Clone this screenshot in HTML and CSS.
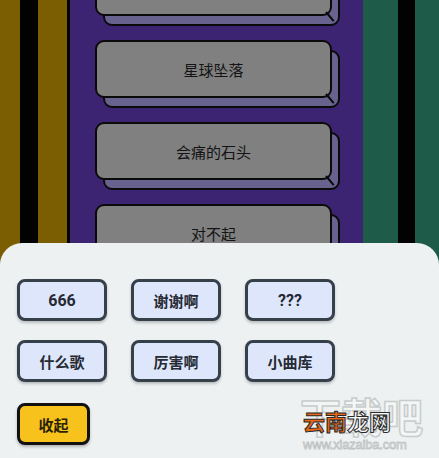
FILE: index.html
```html
<!DOCTYPE html>
<html lang="zh">
<head>
<meta charset="utf-8">
<link rel="stylesheet" href="styles.css">
</head>
<body>
<div class="stage">
  <div class="col olive w20"></div>
  <div class="col black w18"></div>
  <div class="col olive w29"></div>
  <div class="col black w3"></div>
  <div class="col purple">
    <div class="song"><div class="face"></div></div>
    <div class="song"><div class="face">星球坠落</div></div>
    <div class="song"><div class="face">会痛的石头</div></div>
    <div class="song"><div class="face">对不起</div></div>
    <div class="song"><div class="face">收起</div></div>
  </div>
  <div class="col green w35"></div>
  <div class="col black w17"></div>
  <div class="col green w24"></div>
</div>

<div class="sheet">
  <div class="chips">
    <button class="chip num">666</button>
    <button class="chip">谢谢啊</button>
    <button class="chip num">???</button>
    <button class="chip">什么歌</button>
    <button class="chip">厉害啊</button>
    <button class="chip">小曲库</button>
  </div>
  <button class="collapse">收起</button>

  <div class="watermark">
    <div class="wm-big">下载吧</div>
    <div class="wm-mid"><span class="wm-orange">云南</span><span class="wm-white">龙网</span></div>
    <div class="wm-url">www.xiazaiba.com</div>
  </div>
</div>
</body>
</html>
```

FILE: styles.css
```css
html, body {
  margin: 0;
  padding: 0;
}
body {
  width: 439px;
  height: 458px;
  overflow: hidden;
  position: relative;
  font-family: "Noto Sans CJK SC", "Noto Sans", sans-serif;
  background: #000;
}
.stage {
  display: flex;
  height: 458px;
}
.col { flex: none; height: 100%; }
.olive { background: #7b5e02; }
.black { background: #020202; }
.green { background: #1f5b49; }
.w20 { width: 20px; }
.w18 { width: 18px; }
.w29 { width: 29px; }
.w3 { width: 3px; }
.w35 { width: 35px; }
.w17 { width: 17px; }
.w24 { width: 24px; }
.purple {
  flex: 1;
  background: #3c2473;
  padding-left: 25px;
  display: flex;
  flex-direction: column;
  gap: 24px;
  overflow: hidden;
}
.song {
  position: relative;
  width: 237px;
  height: 58px;
  flex: none;
}
.song:first-child { margin-top: -42px; }
.song::before {
  content: "";
  position: absolute;
  left: 8px;
  top: 10px;
  width: 237px;
  height: 58px;
  box-sizing: border-box;
  border: 2px solid #0a0a0a;
  border-radius: 9px;
  background: #68628e;
}
.face {
  position: relative;
  box-sizing: border-box;
  height: 58px;
  border: 2px solid #0a0a0a;
  border-radius: 9px;
  background: #808080;
  display: flex;
  align-items: center;
  justify-content: center;
  font-size: 15px;
  color: #141414;
}
.song::after {
  content: "";
  position: absolute;
  left: 231px;
  top: 53px;
  width: 12px;
  height: 2px;
  background: #0a0a0a;
  transform: rotate(50deg);
  transform-origin: left center;
}

.sheet {
  position: absolute;
  left: 0;
  right: 0;
  top: 243px;
  bottom: 0;
  background: #edf1f1;
  border-radius: 22px 22px 0 0;
  padding: 36px 0 0 17px;
  box-sizing: border-box;
}
.chips {
  display: grid;
  grid-template-columns: repeat(3, 90px);
  column-gap: 24px;
  row-gap: 19px;
}
button {
  font-family: inherit;
  margin: 0;
  cursor: pointer;
}
.chip {
  height: 42px;
  box-sizing: border-box;
  border: 3px solid #36404b;
  border-radius: 8px;
  background: #dde6fb;
  box-shadow: 0 2px 3px rgba(0,0,0,0.22);
  font-size: 15px;
  font-weight: 700;
  color: #262a33;
  padding: 0;
}
.chip.num {
  font-family: Roboto, "Noto Sans", sans-serif;
  font-size: 16px;
}
.collapse {
  display: block;
  margin-top: 21px;
  width: 73px;
  height: 42px;
  box-sizing: border-box;
  border: 3px solid #111;
  border-radius: 8px;
  background: #f6c21b;
  box-shadow: 0 2px 3px rgba(0,0,0,0.25);
  font-size: 15px;
  font-weight: 700;
  color: #2a2206;
  padding: 0;
}

.watermark {
  position: absolute;
  left: 300px;
  top: 150px;
  width: 139px;
  height: 70px;
  pointer-events: none;
}
.wm-big {
  position: absolute;
  left: 0;
  top: -8px;
  font-size: 41px;
  font-weight: 700;
  color: #f4f6f6;
  -webkit-text-stroke: 1.5px #c9cccc;
  white-space: nowrap;
}
.wm-mid {
  position: absolute;
  left: 3px;
  top: 14px;
  font-size: 22px;
  font-weight: 700;
  line-height: 26px;
  white-space: nowrap;
  -webkit-text-stroke: 1px #2a2a2a;
}
.wm-orange { color: #ea6616; }
.wm-white { color: #fbfbfb; }
.wm-url {
  position: absolute;
  left: 3px;
  top: 45px;
  font-family: "Liberation Sans", sans-serif;
  font-size: 13px;
  line-height: 14px;
  letter-spacing: -0.2px;
  color: #f4f6f6;
  -webkit-text-stroke: 0.8px #bfc3c3;
  white-space: nowrap;
}
```
